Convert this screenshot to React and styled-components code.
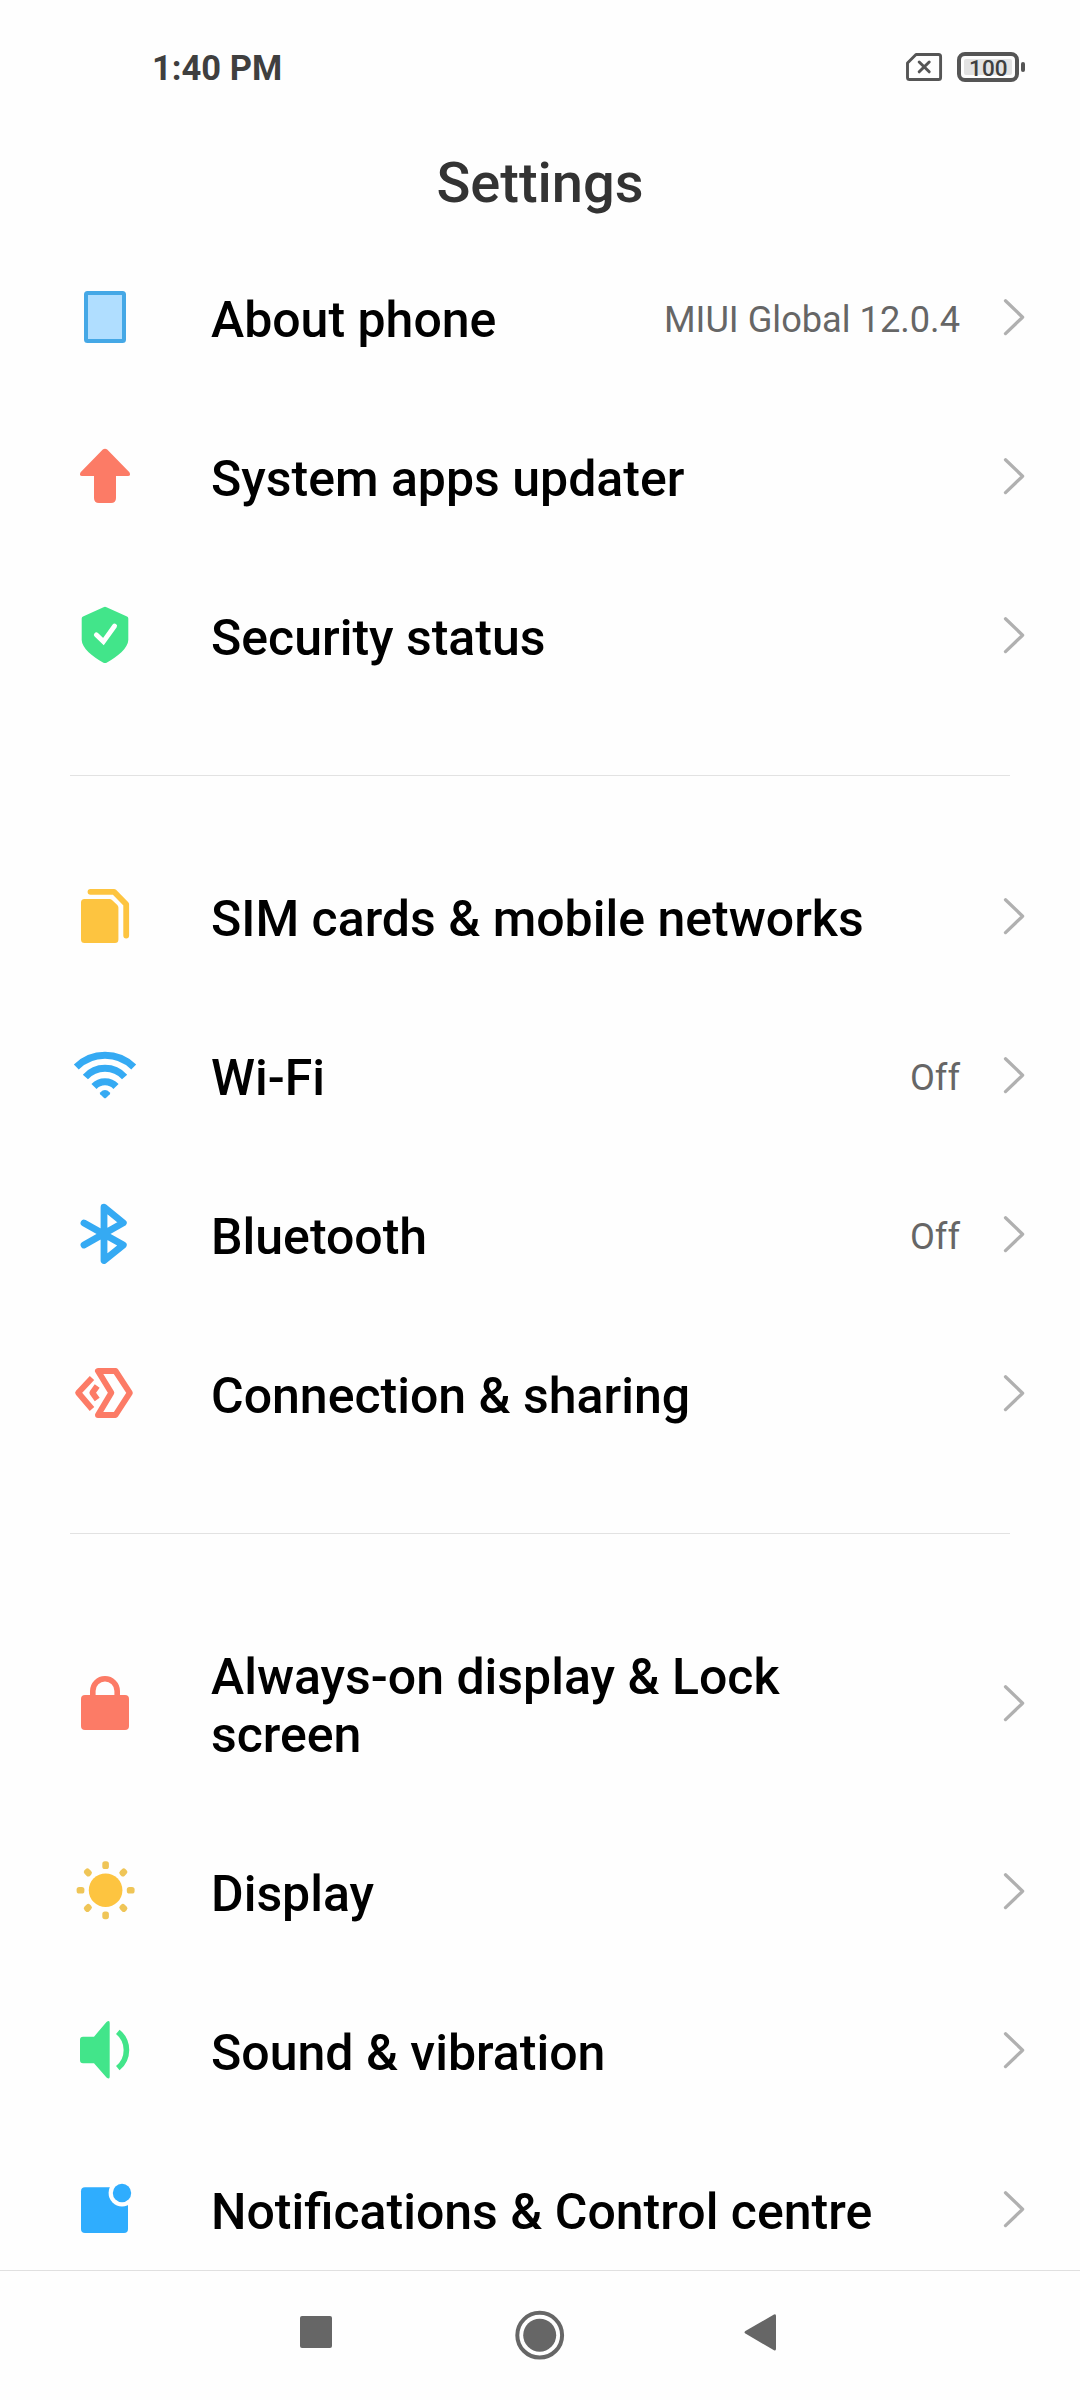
import React from 'react';
import styled, { createGlobalStyle } from 'styled-components';

const BLUE = '#35aaf3';
const CORAL = '#fc7b66';
const GREEN = '#42e58a';
const YELLOW = '#fdc440';
const GREY = '#666666';

const GlobalStyle = createGlobalStyle`
  * {
    box-sizing: border-box;
  }

  body {
    margin: 0;
    background: #fefefe;
    font-family: Roboto, 'Noto Sans', Arial, sans-serif;
  }

  svg {
    display: block;
    flex-shrink: 0;
  }
`;

const Screen = styled.div`
  width: 1080px;
  height: 2400px;
  display: flex;
  flex-direction: column;
  overflow: hidden;
  background: #fefefe;
`;

const StatusBar = styled.div`
  height: 134px;
  padding: 0 54px 0 152px;
  display: flex;
  align-items: center;
  justify-content: space-between;
  flex-shrink: 0;
`;

const Time = styled.div`
  font-size: 34.5px;
  font-weight: 700;
  line-height: 40px;
  padding-top: 1px;
  color: #3f3f3f;
`;

const StatusIcons = styled.div`
  display: flex;
  align-items: center;
  gap: 14px;
`;

const Header = styled.h1`
  height: 104px;
  margin: 0;
  padding-bottom: 6px;
  display: flex;
  align-items: center;
  justify-content: center;
  flex-shrink: 0;
  font-size: 56px;
  font-weight: 500;
  color: #333333;
`;

const List = styled.div`
  flex: 1;
  min-height: 0;
  overflow: hidden;
`;

const Divider = styled.hr`
  height: 1px;
  margin: 60px 70px 61px;
  border: none;
  background: #e2e2e2;
`;

const Row = styled.div`
  padding: 0 54px 0 69px;
  display: flex;
  align-items: center;
`;

const Label = styled.div`
  flex: 1;
  padding: 53px 0 48px;
  margin: 0 30px 0 70px;
  font-size: 50px;
  font-weight: 500;
  line-height: 58px;
  color: #000000;
`;

const Value = styled.div`
  padding-top: 4px;
  font-size: 36.2px;
  line-height: 42px;
  color: ${GREY};
`;

const ChevronBox = styled.div`
  margin-left: 43px;
`;

const NavBar = styled.div`
  height: 130px;
  border-top: 1px solid #e0e0e0;
  display: flex;
  align-items: center;
  justify-content: center;
  flex-shrink: 0;
`;

const NavButton = styled.div`
  width: 220px;
  display: flex;
  justify-content: center;
`;

const Icon = ({ children }) => (
  <svg width="72" height="71" viewBox="0 0 72 71" fill="none">
    {children}
  </svg>
);

const PhoneIcon = () => (
  <Icon>
    <rect x="17" y="11" width="38" height="48" rx="1.5" fill="#b0deff" stroke="#45a8e6" strokeWidth="4" />
  </Icon>
);

const UpdateIcon = () => (
  <Icon>
    <path
      d="M33.8 8.6Q36 6.8 38.2 8.6L60.4 31.2Q62.2 34.6 59 35H47V57Q47 62 42 62H30Q25 62 25 57V35H13Q9.8 34.6 11.6 31.2Z"
      fill={CORAL}
    />
  </Icon>
);

const ShieldIcon = () => (
  <Icon>
    <path
      d="M34.5 7.2Q36 6.4 37.5 7.2L58 16.6Q59.3 17.2 59.3 18.6V40C59.3 48 48 57 38 62.4Q36 63.6 34 62.4C24 57 12.7 48 12.7 40V18.6Q12.7 17.2 14 16.6Z"
      fill={GREEN}
    />
    <path d="M27.3 34.8L34.4 41.6L45.6 26" stroke="#ffffff" strokeWidth="4.8" strokeLinecap="round" />
  </Icon>
);

const SimIcon = () => (
  <Icon>
    <path d="M15.5 18H40.5Q42 18 43 19L48.3 24Q49.4 25 49.4 26.5V58.5Q49.4 62 46 62H15.5Q12 62 12 58.5V21.5Q12 18 15.5 18Z" fill={YELLOW} />
    <path d="M21.5 10.8H45L57.2 23.2V54.5" stroke={YELLOW} strokeWidth="5.8" strokeLinecap="round" strokeLinejoin="round" />
  </Icon>
);

const WifiIcon = () => (
  <Icon>
    <g stroke={BLUE} strokeWidth="7">
      <path d="M7.3 27A41 41 0 0 1 64.7 27" />
      <path d="M16.4 37A26.4 26.4 0 0 1 55.6 37" />
      <path d="M25 46.5A15 15 0 0 1 47 46.5" />
    </g>
    <path d="M31.2 52.4Q36 47.6 40.8 52.4Q41.6 53.3 40.8 54.2L37.2 57.8Q36 58.8 34.8 57.8L31.2 54.2Q30.4 53.3 31.2 52.4Z" fill={BLUE} />
  </Icon>
);

const BluetoothIcon = () => (
  <Icon>
    <path
      d="M15 24L54.3 46L35 61.5V8.2L54.3 23.8L15 46"
      stroke={BLUE}
      strokeWidth="6.8"
      strokeLinecap="round"
      strokeLinejoin="round"
    />
  </Icon>
);

const ShareIcon = () => (
  <Icon>
    <g stroke={CORAL} strokeWidth="6" strokeLinejoin="round">
      <path d="M29 13H46.5L60.8 34.8L46.5 57H29L42.3 34.8Z" />
      <path d="M23 20L9.2 34.8L23 51" />
      <path d="M28.2 28L23.4 34.8L28.2 41.5" />
    </g>
  </Icon>
);

const LockIcon = () => (
  <Icon>
    <rect x="12" y="27" width="48" height="35" rx="4" fill={CORAL} />
    <path d="M23.8 28V23A12.2 12.2 0 0 1 48.2 23V28" stroke={CORAL} strokeWidth="5.6" />
  </Icon>
);

const SunIcon = () => (
  <Icon>
    <circle cx="36.6" cy="34.2" r="16.8" fill={YELLOW} />
    {[0, 45, 90, 135, 180, 225, 270, 315].map((angle) => (
      <rect
        key={angle}
        x="33.3"
        y="5.2"
        width="6.6"
        height="7.8"
        rx="2.6"
        fill="#efc557"
        transform={`rotate(${angle} 36.6 34.2)`}
      />
    ))}
  </Icon>
);

const SoundIcon = () => (
  <Icon>
    <path d="M14 21.7H25L37.5 7Q40.7 4.6 40.7 8V61.5Q40.7 65 37.5 62.4L25 48.3H14Q11 48.3 11 45.3V24.7Q11 21.7 14 21.7Z" fill={GREEN} />
    <path d="M48.8 16.8A23.5 23.5 0 0 1 48.8 53.2" stroke={GREEN} strokeWidth="5.6" />
  </Icon>
);

const NotificationIcon = () => (
  <Icon>
    <rect x="12" y="13.3" width="47" height="45.7" rx="4" fill="#2fadfe" />
    <circle cx="53" cy="19" r="13.4" fill="#fefefe" />
    <circle cx="53" cy="19" r="9.2" fill="#2fadfe" />
  </Icon>
);

const Chevron = () => (
  <ChevronBox>
    <svg width="23" height="39" viewBox="0 0 23 39" fill="none">
      <path d="M2.5 2.8L19.6 19.2L2.5 35.6" stroke="#b0b0b0" strokeWidth="3.3" strokeLinecap="round" strokeLinejoin="round" />
    </svg>
  </ChevronBox>
);

const NoSimIcon = () => (
  <svg width="37" height="30" viewBox="0 0 37 30" fill="none" stroke="#555555">
    <path d="M10 2.5H32.5Q34.6 2.5 34.6 4.6V25.4Q34.6 27.5 32.5 27.5H3.6Q1.5 27.5 1.5 25.4V11Z" strokeWidth="2.9" strokeLinejoin="round" />
    <path d="M13.2 10L23.2 19.8M23.2 10L13.2 19.8" strokeWidth="3" strokeLinecap="round" />
  </svg>
);

const BatteryIcon = () => (
  <svg width="69" height="30" viewBox="0 0 69 30" fill="none">
    <rect x="2" y="2" width="58" height="26" rx="6" stroke="#555555" strokeWidth="4" />
    <rect x="7" y="7" width="48" height="16" rx="2" fill="#e3e3e3" />
    <rect x="64" y="10" width="4" height="10" rx="2" fill="#555555" />
    <text x="31.3" y="23.6" textAnchor="middle" fontSize="22.5" fontWeight="500" fill="#3f3f3f">
      100
    </text>
  </svg>
);

const groups = [
  [
    { icon: PhoneIcon, label: 'About phone', value: 'MIUI Global 12.0.4' },
    { icon: UpdateIcon, label: 'System apps updater' },
    { icon: ShieldIcon, label: 'Security status' },
  ],
  [
    { icon: SimIcon, label: 'SIM cards & mobile networks' },
    { icon: WifiIcon, label: 'Wi-Fi', value: 'Off' },
    { icon: BluetoothIcon, label: 'Bluetooth', value: 'Off' },
    { icon: ShareIcon, label: 'Connection & sharing' },
  ],
  [
    { icon: LockIcon, label: 'Always-on display & Lock screen' },
    { icon: SunIcon, label: 'Display' },
    { icon: SoundIcon, label: 'Sound & vibration' },
    { icon: NotificationIcon, label: 'Notifications & Control centre' },
  ],
];

function SettingRow({ item }) {
  const ItemIcon = item.icon;

  return (
    <Row>
      <ItemIcon />
      <Label>{item.label}</Label>
      {item.value && <Value>{item.value}</Value>}
      <Chevron />
    </Row>
  );
}

function App() {
  return (
    <Screen>
      <GlobalStyle />
      <StatusBar>
        <Time>1:40 PM</Time>
        <StatusIcons>
          <NoSimIcon />
          <BatteryIcon />
        </StatusIcons>
      </StatusBar>
      <Header>Settings</Header>
      <List>
        {groups.map((group, index) => (
          <React.Fragment key={index}>
            {index > 0 && <Divider />}
            {group.map((item) => (
              <SettingRow key={item.label} item={item} />
            ))}
          </React.Fragment>
        ))}
      </List>
      <NavBar>
        <NavButton>
          <svg width="50" height="51" viewBox="0 0 50 51">
            <rect x="5" y="6" width="32" height="32" rx="2" fill={GREY} />
          </svg>
        </NavButton>
        <NavButton>
          <svg width="50" height="51" viewBox="0 0 50 51">
            <circle cx="24.7" cy="25.2" r="22.4" fill="none" stroke={GREY} strokeWidth="4" />
            <circle cx="24.7" cy="25.2" r="16.5" fill={GREY} />
          </svg>
        </NavButton>
        <NavButton>
          <svg width="50" height="51" viewBox="0 0 50 51">
            <path d="M39 4.6Q41 3.6 41 6V38.8Q41 41.2 39 40.2L10.4 23.6Q8.6 22.3 10.4 21Z" fill={GREY} />
          </svg>
        </NavButton>
      </NavBar>
    </Screen>
  );
}

export default App;
